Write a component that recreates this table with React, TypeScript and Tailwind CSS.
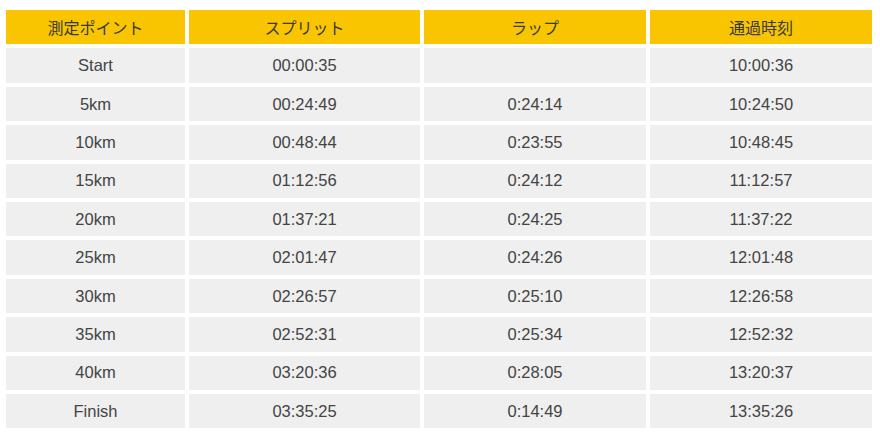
import React from 'react';

type Row = { point: string; split: string; lap: string; time: string }

const rows: Row[] = [
  { point: 'Start', split: '00:00:35', lap: '', time: '10:00:36' },
  { point: '5km', split: '00:24:49', lap: '0:24:14', time: '10:24:50' },
  { point: '10km', split: '00:48:44', lap: '0:23:55', time: '10:48:45' },
  { point: '15km', split: '01:12:56', lap: '0:24:12', time: '11:12:57' },
  { point: '20km', split: '01:37:21', lap: '0:24:25', time: '11:37:22' },
  { point: '25km', split: '02:01:47', lap: '0:24:26', time: '12:01:48' },
  { point: '30km', split: '02:26:57', lap: '0:25:10', time: '12:26:58' },
  { point: '35km', split: '02:52:31', lap: '0:25:34', time: '12:52:32' },
  { point: '40km', split: '03:20:36', lap: '0:28:05', time: '13:20:37' },
  { point: 'Finish', split: '03:35:25', lap: '0:14:49', time: '13:35:26' },
]

const headers = ['測定ポイント', 'スプリット', 'ラップ', '通過時刻']

export default function App(): JSX.Element {
  return (
    <div
      className="w-[880px] h-[438px] bg-white pt-[10px] pl-[6px]"
      style={{ fontFamily: '"Liberation Sans", "Noto Sans CJK JP", sans-serif' }}
    >
      <div className="grid grid-cols-[179px_231px_222px_222px] gap-x-[4px] gap-y-[4px] auto-rows-[34.4px]">
        {headers.map(h => (
          <div
            key={h}
            className="bg-[#f8c500] flex items-center justify-center text-[16px] text-[#3a3a3a]"
            style={{ fontFamily: '"Noto Sans CJK JP", sans-serif' }}
          >
            {h}
          </div>
        ))}
        {rows.map(r => (
          <React.Fragment key={r.point}>
            <div className="bg-[#efefef] flex items-center justify-center text-[16.5px] text-[#444]">{r.point}</div>
            <div className="bg-[#efefef] flex items-center justify-center text-[16.5px] text-[#444]">{r.split}</div>
            <div className="bg-[#efefef] flex items-center justify-center text-[16.5px] text-[#444]">{r.lap}</div>
            <div className="bg-[#efefef] flex items-center justify-center text-[16.5px] text-[#444]">{r.time}</div>
          </React.Fragment>
        ))}
      </div>
    </div>
  )
}
